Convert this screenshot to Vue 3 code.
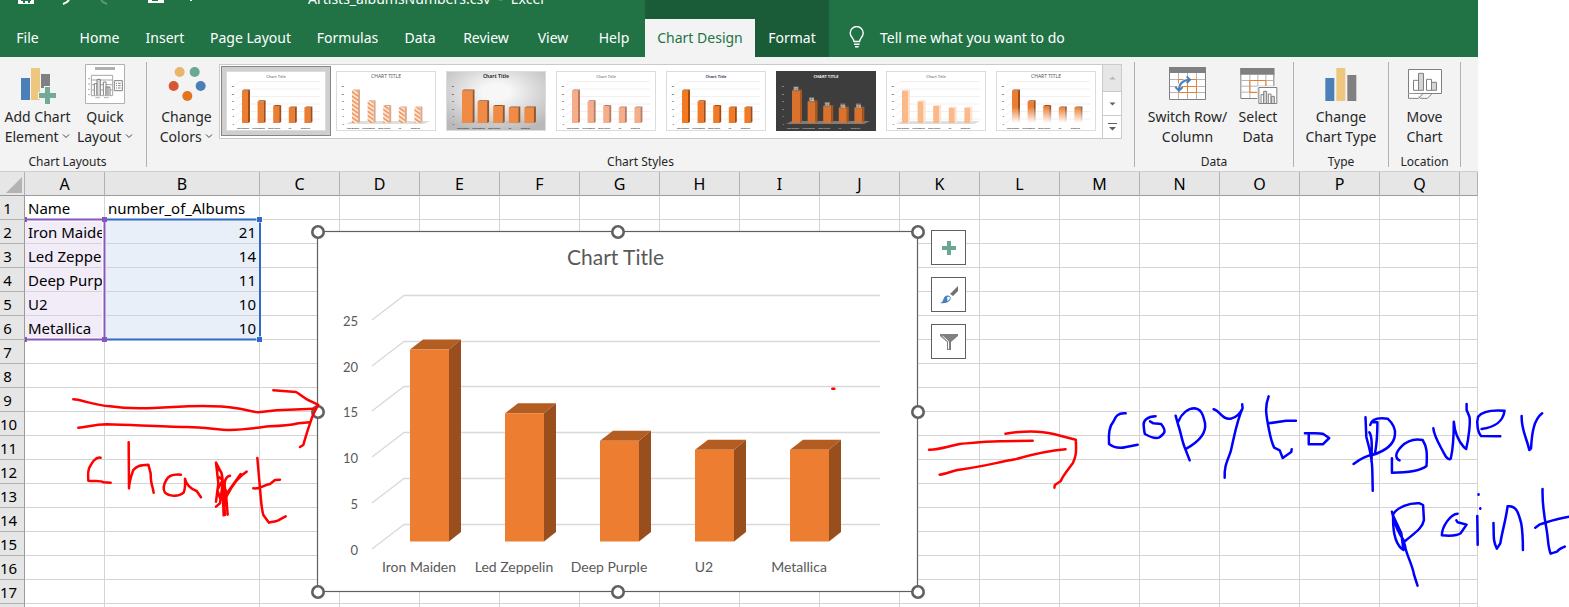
<script setup>
const tabs = ['File', 'Home', 'Insert', 'Page Layout', 'Formulas', 'Data', 'Review', 'View', 'Help', 'Chart Design', 'Format']
const columns = ['A', 'B', 'C', 'D', 'E', 'F', 'G', 'H', 'I', 'J', 'K', 'L', 'M', 'N', 'O', 'P', 'Q', '']
const records = [
  ['Name', 'number_of_Albums'],
  ['Iron Maiden', 21],
  ['Led Zeppelin', 14],
  ['Deep Purple', 11],
  ['U2', 10],
  ['Metallica', 10],
]
const rows = Array.from({ length: 18 }, (_, i) => ({
  number: i + 1,
  cells: columns.map((_, c) => (records[i] && records[i][c] !== undefined ? records[i][c] : '')),
}))

const styles = [
  { id: 1, title: 'Chart Title', kind: 'plain', front: '#ed7d31', side: '#9b4f1c', grid: true },
  { id: 2, title: 'CHART TITLE', kind: 'caps', front: 'url(#hatch)', side: '#d9a98a', floor: true },
  { id: 3, title: 'Chart Title', kind: 'shade', front: '#f08a45', side: '#9b5426', wide: true, floor: true },
  { id: 4, title: 'Chart Title', kind: 'plain', front: '#f5ad8c', side: '#b97b60', grid: true },
  { id: 5, title: 'Chart Title', kind: 'navy', front: '#f47920', side: '#a04c12', grid: true },
  { id: 6, title: 'CHART TITLE', kind: 'dark', front: '#d9722c', side: '#a9561f', fat: true, floor: true },
  { id: 7, title: 'Chart Title', kind: 'plain', front: '#fbb98a', side: '#fbe3d4', grid: true, floor: true },
  { id: 8, title: 'CHART TITLE', kind: 'caps', front: 'url(#fade)', side: 'url(#fadeSide)', grid: true },
]
const series = records.slice(1).map(([name, value], i) => {
  const x = 410 + i * 95
  const y = 541 - value * 9.12
  return {
    name, value,
    center: x + 9,
    front: `${x},${y} ${x + 39},${y} ${x + 39},541.5 ${x},541.5`,
    top: `${x},${y} ${x + 13},${y - 10} ${x + 51},${y - 10} ${x + 39},${y}`,
    side: `${x + 39},${y} ${x + 51},${y - 10} ${x + 51},532 ${x + 39},541.5`,
  }
})
const axis = [25, 20, 15, 10, 5, 0].map((value, i) => ({ value, y: Math.round(295 + i * 45.7) + 0.5 }))
const handles = [318, 618, 918].flatMap(x => [232, 412, 592].map(y => ({ x, y }))).filter(h => !(h.x === 618 && h.y === 412))

function miniBars(s) {
  return records.slice(1).map(([name, value], i) => {
    const x = 16 + i * 15.6
    const w = s.wide ? (i ? 9.5 : 10.5) : s.fat ? 8 : 6
    const h = value * 1.55
    const y = 52 - h
    const d = 2
    return {
      name, value, x, y, w, h,
      side: `${x + w},${y} ${x + w + d},${y - 1} ${x + w + d},51 ${x + w},52`,
      top: `${x},${y} ${x + d},${y - 1} ${x + w + d},${y - 1} ${x + w},${y}`,
    }
  })
}
</script>

<template>
  <div class="page">
    <div class="excel">
      <header class="titlebar">
        <div class="context-band"></div>
        <svg class="quick-icons" width="220" height="8" viewBox="0 0 220 8">
          <path d="M18 0v4h16V0h-3v1H21V0z" fill="#fff" />
          <path d="M23 0h2v3h-2zM28 0h2v3h-2z" fill="#217346" />
          <path d="M69 0Q67 3 63 4" stroke="#fff" stroke-width="2" fill="none" />
          <path d="M101 0Q103 3 107 4" stroke="#5c9a77" stroke-width="2" fill="none" />
          <path d="M148 0h16v3h-16z" fill="#fff" />
          <path d="M152 0h6v1h-6z" fill="#217346" />
          <path d="M190 0h2v1h-2z" fill="#fff" />
        </svg>
        <p class="filename"><span>Artists_albumsNumbers.csv</span><span>-</span><span>Excel</span></p>
        <nav class="tabs">
          <button v-for="t in tabs" :key="t" type="button" class="tab" :class="{ active: t === 'Chart Design', context: t === 'Format', file: t === 'File' }">{{ t }}</button>
        </nav>
        <button type="button" class="tell">
          <svg width="16" height="22" viewBox="0 0 16 22" fill="none" stroke="#fff" stroke-width="1.4">
            <path d="M5 15.500c0-3-3.800-4.500-3.800-8.500a6.500 6.500 0 0 1 13 0c0 4-3.600 5.500-3.600 8.500zM5 18.200h5.600M6 20.800h3.600" />
          </svg>
          <span>Tell me what you want to do</span>
        </button>
      </header>

      <section class="ribbon">
        <div class="group layouts">
          <div class="controls">
            <button type="button" class="big add">
              <svg width="40" height="40" viewBox="57 192 120 120">
                <path d="M66 234h27v66H66z" fill="#4a7fb9" />
                <path d="M96 204h27v96H96z" fill="#eec77e" />
                <path d="M126 222h27v42h-27z" fill="#808080" />
                <path d="M138 261h15v18h18v15h-18v18h-15v-18h-18v-15h18z" fill="#74a996" stroke="#f3f3f3" stroke-width="6" paint-order="stroke" />
              </svg>
              <span>Add Chart</span>
              <span>Element <svg class="caret" width="8" height="6" viewBox="0 0 8 6"><path d="M1 1.500l3 3 3-3" /></svg></span>
            </button>
            <button type="button" class="big quick">
              <svg width="40" height="40" viewBox="255 192 120 120" fill="none" stroke="#808080" stroke-width="3">
                <path d="M256.500 193.500h117v117h-117z" fill="#fff" stroke="#b0b0b0" />
                <path d="M285 205.500h60" stroke="#b0b0b0" stroke-width="9" />
                <path d="M274 226h64v61h-64zM274 240h64M274 254h64M274 270h64" stroke="#a6a6a6" />
                <path d="M264 236h6M264 252h6M264 268h6M264 284h6M286 293h14M312 293h14" stroke="#b0b0b0" />
                <path d="M283 286v-35h8v35M310 286v-40h8v40M323 286v-25h7v25" fill="#fff" />
                <path d="M291 286v-48h10v48M318 286v-25h6v25" fill="#ddd" />
                <path d="M343 242h24v30h-24z" fill="#fff" />
                <path d="M348 250h3M348 257h3M348 264h3M354 250h8M354 257h8M354 264h8" />
              </svg>
              <span>Quick</span>
              <span>Layout <svg class="caret" width="8" height="6" viewBox="0 0 8 6"><path d="M1 1.500l3 3 3-3" /></svg></span>
            </button>
          </div>
          <h2>Chart Layouts</h2>
        </div>

        <div class="group styles">
          <div class="controls">
            <button type="button" class="big colors">
              <svg width="40" height="40" viewBox="499 192 120 120">
                <circle cx="537" cy="216" r="15" fill="#e9b568" />
                <circle cx="582" cy="216" r="15" fill="#6aa893" />
                <circle cx="519" cy="258" r="15" fill="#d65532" />
                <circle cx="600" cy="258" r="15" fill="#4a7fb9" />
                <circle cx="560" cy="288" r="15" fill="#e4741b" />
              </svg>
              <span>Change</span>
              <span>Colors <svg class="caret" width="8" height="6" viewBox="0 0 8 6"><path d="M1 1.500l3 3 3-3" /></svg></span>
            </button>
            <div class="gallery">
              <svg class="defs" width="0" height="0">
                <defs>
                  <pattern id="hatch" width="5" height="3.500" patternUnits="userSpaceOnUse" patternTransform="rotate(35)">
                    <path d="M0 0h5v3.500H0z" fill="#fde6d8" /><path d="M0 0h5v1.700H0z" fill="#f19a63" />
                  </pattern>
                  <linearGradient id="fade" x1="0" y1="20" x2="0" y2="52" gradientUnits="userSpaceOnUse">
                    <stop offset=".5" stop-color="#ed7d31" /><stop offset="1" stop-color="#fff" />
                  </linearGradient>
                  <linearGradient id="fadeSide" x1="0" y1="20" x2="0" y2="52" gradientUnits="userSpaceOnUse">
                    <stop offset=".5" stop-color="#9b4f1c" /><stop offset="1" stop-color="#fff" />
                  </linearGradient>
                  <radialGradient id="shade" cx=".5" cy=".35" r=".7">
                    <stop offset=".2" stop-color="#f7f7f7" /><stop offset="1" stop-color="#b9b9b9" />
                  </radialGradient>
                </defs>
              </svg>
              <div class="thumbs">
                <button v-for="s in styles" :key="s.id" type="button" class="thumb" :class="{ selected: s.id === 1 }" :aria-label="'Style ' + s.id">
                  <svg width="100" height="60" viewBox="0 0 100 60" :class="s.kind">
                    <rect class="paper" x=".5" y=".5" width="99" height="59" />
                    <text class="mini-title" x="50" y="7" text-anchor="middle">{{ s.title }}</text>
                    <g v-if="s.grid" class="mini-grid">
                      <path v-for="n in 6" :key="n" :d="`M10 ${n * 7.5 + 7}l4-4h80`" />
                    </g>
                    <path v-if="s.floor" class="mini-floor" d="M10 53l6-3h78l-6 3z" />
                    <text v-for="n in 6" :key="'a' + n" class="mini-label" x="8" :y="n * 7.5 + 8.5" text-anchor="end">{{ 30 - n * 5 }}</text>
                    <g v-for="b in miniBars(s)" :key="b.name">
                      <rect :x="b.x" :y="b.y" :width="b.w" :height="b.h" :fill="s.front" />
                      <polygon :points="b.side" :fill="s.side" />
                      <polygon :points="b.top" :fill="s.side" />
                      <text class="mini-label" :x="b.x + 1" y="57.5" text-anchor="middle">{{ b.name }}</text>
                      <g v-if="s.kind === 'dark'">
                        <rect :x="b.x + 1.5" :y="b.y - 4" width="5" height="5" fill="#8a7768" />
                        <text class="mini-value" :x="b.x + 4" :y="b.y" text-anchor="middle">{{ b.value }}</text>
                      </g>
                    </g>
                  </svg>
                </button>
              </div>
              <div class="scroll">
                <button type="button" disabled aria-label="Previous styles"><svg width="9" height="10" viewBox="0 0 9 10"><path d="M1.500 6.500l3-3 3 3z" fill="#b5b5b5" /></svg></button>
                <button type="button" aria-label="Next styles"><svg width="9" height="10" viewBox="0 0 9 10"><path d="M1.500 3.500l3 3 3-3z" fill="#606060" /></svg></button>
                <button type="button" aria-label="More styles"><svg width="9" height="10" viewBox="0 0 9 10"><path d="M0 1h9v1H0zM1 5l3.500 3.500L8 5z" fill="#606060" /></svg></button>
              </div>
            </div>
          </div>
          <h2>Chart Styles</h2>
        </div>

        <div class="group data">
          <div class="controls">
            <button type="button" class="big switch">
              <svg width="40" height="40" viewBox="294 192 120 120" fill="none" stroke-width="3">
                <path d="M298.500 202.500h108v96h-108z" fill="#fff" stroke="#808080" />
                <path d="M297 201h111v18H297z" fill="#808080" />
                <path d="M300 238.500h105M300 259.500h105M300 277.500h105M325.500 219v78M352.500 219v78M379.500 219v78" stroke="#b5b5b5" />
                <path d="M325.500 238.500h54v39h-54zM325.500 259.500h54M352.500 238.500v39" stroke="#e8812f" />
                <path d="M327 271q0-29 33-30" stroke="#fff" stroke-width="13" />
                <path d="M327 270q0-29 32-31" stroke="#4a7fb9" stroke-width="6" />
                <path d="M350 229l10 10-10 10M316 261l11 11 11-11" stroke="#4a7fb9" stroke-width="6" />
              </svg>
              <span>Switch Row/</span>
              <span>Column</span>
            </button>
            <button type="button" class="big select">
              <svg width="40" height="40" viewBox="506 192 120 120" fill="none" stroke="#808080" stroke-width="3">
                <path d="M514.500 205.500h99v90h-99z" fill="#fff" />
                <path d="M513 204h102v20H513z" fill="#808080" stroke="none" />
                <path d="M516 241.500h97M516 258.500h97M516 276.500h97M541.500 225v69M565.500 225v69M589.500 225v69" stroke="#b5b5b5" />
                <path d="M541.500 241.500h48v36h-48z" stroke="#e8812f" />
                <path d="M564 258h63v57h-63z" fill="#f3f3f3" stroke="none" />
                <path d="M568.500 262.500h54v48h-54zM575 309v-25h8v25M597 309v-27h8v27" fill="#fff" />
                <path d="M583 309v-35h9v35M606 309v-20h9v20" fill="#d5d5d5" />
              </svg>
              <span>Select</span>
              <span>Data</span>
            </button>
          </div>
          <h2>Data</h2>
        </div>

        <div class="group type">
          <div class="controls">
            <button type="button" class="big">
              <svg width="40" height="40" viewBox="752 192 120 120">
                <path d="M765 234h27v69h-27z" fill="#4a7fb9" />
                <path d="M798 204h27v99h-27z" fill="#eec77e" />
                <path d="M831 225h27v78h-27z" fill="#808080" />
              </svg>
              <span>Change</span>
              <span>Chart Type</span>
            </button>
          </div>
          <h2>Type</h2>
        </div>

        <div class="group location">
          <div class="controls">
            <button type="button" class="big">
              <svg width="40" height="40" viewBox="1005 192 120 120" fill="none" stroke="#808080" stroke-width="3">
                <path d="M1015.500 208.500h99v72h-99z" fill="#fff" />
                <path d="M1015.500 281v14h30l12-13M1052 295h20l14-14M1046 290l6 5" fill="#fff" />
                <path d="M1030.500 271v-30h15v30zM1069.500 271v-33h15v33z" fill="#fff" />
                <path d="M1045.500 271v-51h15v51zM1084.500 271v-24h15v24z" fill="#d5d5d5" />
              </svg>
              <span>Move</span>
              <span>Chart</span>
            </button>
          </div>
          <h2>Location</h2>
        </div>
      </section>

      <main class="sheet">
        <table>
          <colgroup>
            <col class="col-index"><col class="col-a"><col class="col-b">
            <col v-for="n in 15" :key="n" class="col-n">
            <col>
          </colgroup>
          <thead>
            <tr>
              <th class="corner"><svg width="16" height="16" viewBox="0 0 16 16"><path d="M16 0v16H0z" fill="#b3b3b3" /></svg></th>
              <th v-for="c in columns" :key="c">{{ c }}</th>
            </tr>
          </thead>
          <tbody>
            <tr v-for="r in rows" :key="r.number">
              <th>{{ r.number }}</th>
              <td v-for="(v, c) in r.cells" :key="c" :class="{ names: c === 0 && r.number > 1 && r.number < 7, values: c === 1 && r.number > 1 && r.number < 7 }">{{ v }}</td>
            </tr>
          </tbody>
        </table>

        <svg class="ranges" width="240" height="130" viewBox="24 215 240 130" fill="none">
          <path d="M26 219.500h78v120H26" stroke="#fff" stroke-width="4" />
          <path d="M26 219.500h79M26 339.500h79M104.500 219v121" stroke="#8659b8" stroke-width="2" />
          <path d="M107 219.500h153v120H107" stroke="#3069c6" stroke-width="2" />
          <path d="M25 217h2v5h-2zM102 217h5v5h-5zM25 337h2v5h-2zM102 337h5v5h-5z" fill="#8659b8" />
          <path d="M257 217h5v5h-5zM257 337h5v5h-5z" fill="#3069c6" stroke="#fff" paint-order="stroke" />
        </svg>

        <svg class="chart" width="616" height="376" viewBox="310 224 616 376" role="img" aria-label="Chart Title">
          <rect x="317.5" y="231.5" width="600" height="360" fill="#fff" stroke="#606060" stroke-width="1.2" />
          <text class="chart-title" x="615.5" y="265" text-anchor="middle">Chart Title</text>
          <g v-for="a in axis" :key="a.value">
            <path class="gridline" :d="`M372 ${a.y + 24.5}L404 ${a.y}H880`" />
            <text class="axis" x="358" :y="a.y + 30" text-anchor="end">{{ a.value }}</text>
          </g>
          <g v-for="b in series" :key="b.name">
            <polygon :points="b.top" fill="#b35d22" />
            <polygon :points="b.side" fill="#984f1d" />
            <polygon :points="b.front" fill="#ed7d31" />
            <text class="axis category" :x="b.center" y="572" text-anchor="middle">{{ b.name }}</text>
          </g>
          <circle v-for="(h, i) in handles" :key="i" class="handle" :cx="h.x" :cy="h.y" r="5.7" />
        </svg>

        <div class="chart-tools">
          <button type="button" aria-label="Chart elements">
            <svg width="20" height="20" viewBox="0 0 20 20"><path d="M8 3h4v5h5v4h-5v5H8v-5H3V8h5z" fill="#6aa893" /></svg>
          </button>
          <button type="button" aria-label="Chart styles">
            <svg width="20" height="20" viewBox="0 0 20 20"><path d="M19 1v5l-5 5-3-2z" fill="#707070" /><path d="M10.500 9.500l3 2" stroke="#fff" stroke-width="1" /><path d="M1 18q3-1 3.500-4 1-4 5-3.500 3 1 2 4Q9 19 1 18z" fill="#4a7fb9" /><path d="M8 12q3-1 3 1t-3 3q1-2 0-4z" fill="#fff" /></svg>
          </button>
          <button type="button" aria-label="Chart filters">
            <svg width="20" height="20" viewBox="0 0 20 20"><path d="M1 2h18v2l-7 6v8H8v-8L1 4z" fill="#808080" /><path d="M3.500 4l6 5.500V17" fill="none" stroke="#fff" stroke-width="1" /></svg>
          </button>
        </div>
      </main>
    </div>

    <svg class="ink" width="1569" height="607" viewBox="0 0 1569 607">
      <g class="red" transform="translate(0 190) scale(.33333)">
        <path d="M220 628C250 630 280 645 330 649C390 658 450 655 520 651C590 647 650 645 710 655C740 660 750 664 775 667L830 661L940 656" />
        <path d="M820 601L888 606C900 612 910 624 930 633L955 645C945 660 938 675 930 700C920 730 915 745 910 765L900 771" />
        <path d="M235 713C260 712 280 704 320 703C400 705 480 710 560 711C620 711 650 720 690 720C740 718 780 712 810 709C850 708 870 706 895 700L930 697" />
        <path d="M302 803C285 800 275 820 267 835C262 850 265 860 265 872C285 875 300 870 310 877L332 878" />
        <path d="M386 757L387 895C388 870 395 855 400 840C410 828 420 825 445 824L452 850C452 870 455 885 458 893L461 908" />
        <path d="M543 854C520 852 505 856 499 870C490 885 490 900 495 908C505 918 535 922 551 908C556 895 556 880 555 866C558 880 570 895 590 903L603 922" />
        <path d="M648 818L655 880L648 935M648 818L665 850L675 975M655 840C665 838 668 860 668 880L660 940L648 950M655 860L668 870L652 900L662 930L668 900L671 976L677 900L683 974M690 857C675 860 668 880 680 920M682 915C700 880 715 860 740 845M684 905L722 852" />
        <path d="M772 804L780 895C783 930 784 955 790 975L807 998C825 993 835 995 840 988L857 979M760 895C780 898 790 885 810 882L825 870L840 869" />
        <path d="M2497 596h6" />
      </g>
      <g transform="translate(900 370) scale(.42666 .33333)">
        <g class="red">
          <path d="M68 239C90 240 110 230 140 222C190 216 210 213 240 214L311 212M93 314C110 312 125 300 150 297C190 290 230 277 270 268C300 257 340 243 388 238" />
          <path d="M247 191C290 182 330 182 360 192L412 209C414 250 412 260 405 280C390 305 380 320 377 333L363 345L362 353" />
        </g>
        <g class="blue">
          <path d="M529 130C510 128 505 140 500 155C490 170 488 190 490 222C500 232 515 236 530 231L557 224" />
          <path d="M599 139C580 140 570 150 571 165C572 175 572 185 574 192C585 200 600 207 608 202C620 190 626 185 612 162L594 160L586 154" />
          <path d="M646 137L652 165C658 185 660 210 668 235L679 271M652 155C660 130 675 115 690 115C705 117 710 130 715 160C718 190 700 215 672 235" />
          <path d="M735 118C750 122 755 150 775 146C790 142 798 130 803 115L802 103M803 115C790 150 785 190 775 245C765 280 760 290 761 323" />
          <path d="M864 79C855 110 858 130 862 160C866 190 870 215 877 233L890 241L897 264L917 246L918 238M864 160L905 152L928 152" />
          <path d="M949 190C970 190 985 188 992 192L1006 204L991 223L958 223L958 192" />
          <path d="M1091 142L1093 200C1098 230 1106 250 1107 300L1108 362M1100 187C1107 200 1106 230 1105 275M1063 282C1080 265 1100 255 1113 252C1118 220 1119 190 1119 157L1105 157L1102 165C1105 145 1125 143 1143 146C1155 160 1162 175 1160 195C1158 220 1145 240 1107 255" />
          <path d="M1171 271C1160 265 1160 250 1175 230C1190 210 1205 205 1225 210C1235 230 1236 250 1234 288C1220 302 1190 308 1153 308L1153 265" />
          <path d="M1250 175C1252 200 1265 225 1275 250C1282 270 1290 270 1291 265C1298 225 1298 190 1298 155C1300 190 1310 215 1322 232L1327 237C1333 205 1338 150 1334 138L1328 120L1328 102" />
          <path d="M1363 177C1390 172 1413 160 1417 122C1395 120 1365 122 1355 140C1350 160 1355 190 1362 198L1407 199" />
          <path d="M1457 138C1456 180 1468 200 1475 240L1479 235C1481 190 1485 150 1505 130" />
          <path d="M1153 425C1160 470 1170 490 1180 510L1184 530C1187 555 1200 580 1205 615L1213 647M1156 432C1154 490 1162 525 1180 540L1175 490L1155 435C1165 410 1195 398 1218 400L1226 405L1228 450C1225 475 1205 490 1184 513" />
          <path d="M1307 431C1290 432 1270 470 1270 496C1290 498 1308 496 1314 490L1328 464L1307 457L1304 451" />
          <path d="M1353 438L1354 524M1356 373v1M1360 415v1" />
          <path d="M1391 459C1392 500 1390 515 1399 536L1407 520C1412 480 1420 450 1424 409C1445 405 1450 430 1456 460C1460 490 1460 515 1460 540" />
          <path d="M1506 357C1505 400 1510 440 1515 475C1520 510 1518 530 1525 551L1540 545C1545 535 1555 532 1558 530M1489 473L1500 463C1520 455 1540 445 1568 440" />
        </g>
      </g>
    </svg>
  </div>
</template>

<style>
body { background: #fff; }
</style>

<style scoped>
.page {
  position: relative;
  height: 100vh;
  overflow: hidden;
  box-sizing: border-box;
  padding-right: 91px;
  font-family: "Noto Sans", "Open Sans", sans-serif;
  color: #262626;
}
button {
  font: inherit;
  color: inherit;
  background: none;
  border: 0;
  padding: 0;
  margin: 0;
}
.excel {
  display: flex;
  flex-direction: column;
  height: 100%;
  overflow: hidden;
}

.titlebar {
  position: relative;
  flex: none;
  display: flex;
  align-items: flex-end;
  height: 57px;
  overflow: hidden;
  background: #217346;
  color: #fff;
  font-size: 14px;
}
.context-band {
  position: absolute;
  left: 645px;
  top: 0;
  width: 184px;
  height: 57px;
  background: #1b5c38;
}
.quick-icons { position: absolute; left: 0; top: 0; }
.filename {
  position: absolute;
  left: 308px;
  top: -10px;
  display: flex;
  gap: 8px;
  margin: 0;
  font-size: 14px;
  line-height: 18px;
}
.tabs {
  position: relative;
  display: grid;
  grid-template-columns: 66px 67px 64px 107px 87px 58px 74px 60px 62px 110px 74px;
  height: 38px;
}
.tab { padding-bottom: 2px; text-align: center; white-space: nowrap; }
.tab.file { padding-right: 11px; }
.tab.active { background: #f3f3f3; color: #217346; }
.tab.context { background: #1b5c38; }
.tell {
  position: relative;
  display: flex;
  align-items: center;
  gap: 15px;
  height: 38px;
  padding: 0 0 2px 20px;
  white-space: nowrap;
}

.ribbon {
  flex: none;
  display: flex;
  height: 115px;
  box-sizing: border-box;
  padding: 5px 17px 4px 0;
  background: #f3f3f3;
  border-bottom: 1px solid #cfcfcf;
  font-size: 14px;
}
.group {
  flex: none;
  display: flex;
  flex-direction: column;
  box-sizing: border-box;
  border-right: 1px solid #b1b1b1;
}
.controls { flex: none; display: flex; height: 85px; }
h2 {
  flex: none;
  margin: 0;
  font-size: 12px;
  font-weight: 400;
  line-height: 20px;
  padding-top: 5px;
  height: 16px;
  text-align: center;
}
.layouts { width: 147px; padding-right: 11px; }
.styles { flex: 1; min-width: 0; }
.styles .controls { padding: 0 12px 0 7px; }
.data { width: 159px; }
.data .controls { padding-left: 9px; }
.type { width: 95px; }
.location { width: 72px; }
.big {
  display: flex;
  flex: 1;
  flex-direction: column;
  align-items: center;
  padding-top: 2px;
  line-height: 20px;
  white-space: nowrap;
}
.big > svg { flex: none; margin-bottom: 3px; }
.big.add { flex: 0 0 75px; }
.big.quick { flex: 0 0 60px; }
.big.colors { flex: 0 0 65px; }
.big.switch { flex: 0 0 87px; }
.big.select { flex: 0 0 54px; }
.caret {
  vertical-align: 3px;
  fill: none;
  stroke: #444;
}
.gallery {
  display: flex;
  flex: 1;
  min-width: 0;
  height: 75px;
  box-sizing: border-box;
  margin-top: 2px;
  border: 1px solid #cacaca;
  background: #fff;
}
.defs { position: absolute; }
.thumbs {
  display: flex;
  flex: 1;
  min-width: 0;
  overflow: hidden;
  padding: 1px 0 0 1px;
}
.thumb {
  flex: 0 0 110px;
  height: 70px;
  box-sizing: border-box;
  border: 1px solid transparent;
  padding: 4px;
}
.thumb svg { display: block; }
.thumb.selected { background: #d0cfcd; border-color: #868686; }
.paper { fill: #fff; stroke: #dcdcdc; }
.shade .paper { fill: url(#shade); }
.dark .paper { fill: #3d3d3d; stroke: #3d3d3d; }
.mini-title { font-size: 4px; fill: #555; }
.caps .mini-title { font-size: 5px; }
.shade .mini-title { font-size: 5px; font-weight: 700; fill: #333; }
.navy .mini-title { font-weight: 700; fill: #3b4a63; }
.dark .mini-title { font-weight: 700; fill: #eee; }
.mini-label { font-size: 2px; font-weight: 700; fill: #333; }
.dark .mini-label { fill: #bbb; }
.mini-value { font-size: 4px; fill: #fff; }
.mini-grid { fill: none; stroke: #f0f0f0; }
.mini-floor { fill: #bdbdbd; opacity: .5; }
.scroll {
  display: grid;
  grid-template-rows: 26px 24px 23px;
  width: 18px;
  border-left: 1px solid #cacaca;
}
.scroll button { display: grid; place-items: center; }
.scroll button + button { border-top: 1px solid #cacaca; }
.scroll button:disabled { background: #e6e6e6; }

.sheet {
  position: relative;
  flex: 1;
  min-height: 0;
  overflow: hidden;
}
table {
  width: 100%;
  table-layout: fixed;
  border-collapse: separate;
  border-spacing: 0;
  font-size: 15px;
  color: #000;
}
.col-index { width: 25px; }
.col-a { width: 80px; }
.col-b { width: 155px; }
.col-n { width: 80px; }
th, td {
  height: 24px;
  box-sizing: border-box;
  padding: 0 3px;
  border-right: 1px solid #d4d4d4;
  border-bottom: 1px solid #d4d4d4;
  line-height: 22px;
  overflow: hidden;
  white-space: nowrap;
  text-align: left;
  font-weight: 400;
}
th {
  padding: 0;
  background: #e6e6e6;
  border-color: #b1b1b1;
  text-align: center;
}
thead th { border-bottom-color: #9b9b9b; font-size: 16px; }
tbody th { border-right-color: #9b9b9b; padding-right: 9px; }
.corner { padding: 3px 0 0 4px; line-height: 0; }
td.names { background: #f1ecf8; }
td.values { background: #e8eff9; text-align: right; }
.ranges { position: absolute; left: 24px; top: 43px; }
.chart { position: absolute; left: 310px; top: 52px; }
.chart text { font-family: Lato, "Noto Sans", sans-serif; fill: #595959; }
.chart .chart-title { font-size: 21px; }
.chart .axis { font-size: 13px; }
.chart .category { font-size: 14px; }
.gridline { fill: none; stroke: #d9d9d9; stroke-width: 1.3; }
.handle { fill: #fff; stroke: #606060; stroke-width: 2.6; }
.chart-tools {
  position: absolute;
  left: 931px;
  top: 58px;
  display: flex;
  flex-direction: column;
  gap: 12px;
}
.chart-tools button {
  display: grid;
  place-items: center;
  width: 35px;
  height: 35px;
  border: 1px solid #606060;
  background: #fff;
}
.ink {
  position: absolute;
  left: 0;
  top: 0;
  pointer-events: none;
}
.ink path {
  fill: none;
  stroke-width: 2.5;
  stroke-linecap: round;
  stroke-linejoin: round;
  vector-effect: non-scaling-stroke;
}
.red path { stroke: #f00; }
.blue path { stroke: #00f; }
</style>
